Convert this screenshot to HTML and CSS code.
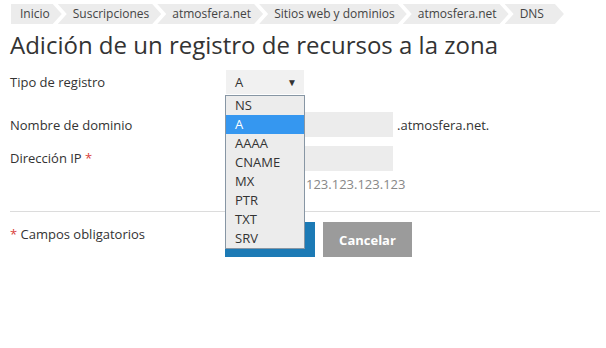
FILE: index.html
```html
<!DOCTYPE html>
<html lang="es">
<head>
    <meta charset="UTF-8">
    <title>Adición de un registro de recursos a la zona</title>
    <link rel="stylesheet" href="styles.css">
</head>
<body>
    <ul class="breadcrumb">
        <li class="crumb first">Inicio</li>
        <li class="crumb">Suscripciones</li>
        <li class="crumb">atmosfera.net</li>
        <li class="crumb">Sitios web y dominios</li>
        <li class="crumb">atmosfera.net</li>
        <li class="crumb">DNS</li>
    </ul>
    <h1 class="title">Adición de un registro de recursos a la zona</h1>

    <form class="form">
        <div class="row">
            <label class="label">Tipo de registro</label>
            <div class="field">
                <div class="select">
                    <span>A</span>
                    <span class="arrow">&#9660;</span>
                    <ul class="options">
                        <li>NS</li>
                        <li class="selected">A</li>
                        <li>AAAA</li>
                        <li>CNAME</li>
                        <li>MX</li>
                        <li>PTR</li>
                        <li>TXT</li>
                        <li>SRV</li>
                    </ul>
                </div>
            </div>
        </div>
        <div class="row row-domain">
            <label class="label">Nombre de dominio</label>
            <div class="field inline">
                <input class="input" type="text">
                <span class="suffix">.atmosfera.net.</span>
            </div>
        </div>
        <div class="row row-ip">
            <label class="label">Dirección IP <span class="req">*</span></label>
            <div class="field">
                <input class="input" type="text">
                <div class="hint">123.123.123.123</div>
            </div>
        </div>
        <div class="footer">
            <div class="label"><span class="req">*</span> Campos obligatorios</div>
            <div class="buttons">
                <!-- label is hidden behind the open list -->
                <button type="button" class="btn btn-primary" aria-label="Aceptar"></button>
                <button type="button" class="btn btn-cancel">Cancelar</button>
            </div>
        </div>
    </form>
</body>
</html>
```

FILE: styles.css
```css
body {
    font-family: "Open Sans", "Noto Sans", sans-serif;
    font-size: 13px;
    color: #333;
    margin: 0;
    padding: 0;
    background-color: #fff;
}
.breadcrumb {
    display: flex;
    list-style: none;
    margin: 4px 0 0 11px;
    padding: 0;
    height: 20px;
}
.crumb {
    background-color: #ececec;
    color: #444;
    font-size: 12px;
    line-height: 20px;
    padding: 0 12px 0 15px;
    margin-right: -6px;
    clip-path: polygon(0 0, calc(100% - 9px) 0, 100% 50%, calc(100% - 9px) 100%, 0 100%, 9px 50%);
}
.crumb.first {
    padding-left: 9px;
    clip-path: polygon(0 0, calc(100% - 9px) 0, 100% 50%, calc(100% - 9px) 100%, 0 100%);
}
.crumb:last-child {
    padding-right: 20px;
}
.crumb + .crumb {
    margin-left: 2px;
}
.title {
    font-size: 24px;
    font-weight: normal;
    line-height: 30px;
    margin: 6px 0 0 10px;
    color: #333;
}
.form {
    margin: 10px 0 0 0;
    padding: 0 6px 0 10px;
}
.row {
    display: grid;
    grid-template-columns: 216px 1fr;
    align-items: center;
}
.label {
    font-size: 13px;
}
.req {
    color: #d9413a;
}
.row-domain {
    margin-top: 18px;
}
.row-ip {
    margin-top: 9px;
    align-items: start;
}
.row-ip .label {
    line-height: 25px;
}
.select {
    position: relative;
    width: 78px;
    height: 24px;
    background-color: #f1f1f1;
    display: flex;
    justify-content: space-between;
    align-items: center;
    padding: 0 7px 0 9px;
    box-sizing: border-box;
}
.arrow {
    font-size: 10px;
}
.options {
    position: absolute;
    top: 25px;
    left: -1px;
    width: 78px;
    list-style: none;
    margin: 0;
    padding: 0;
    border: 1px solid #8796a4;
    background-color: #ececec;
    z-index: 2;
}
.options li {
    height: 19px;
    line-height: 19px;
    padding-left: 9px;
}
.options li.selected {
    background-color: #3597f0;
    color: #fff;
}
.inline {
    display: flex;
    align-items: center;
}
.input {
    width: 167px;
    height: 25px;
    box-sizing: border-box;
    border: none;
    background-color: #ececec;
    margin: 0;
}
.suffix {
    margin-left: 4px;
}
.hint {
    color: #888;
    font-size: 13px;
    margin-top: 4px;
    padding-left: 80px;
    line-height: 18px;
}
.footer {
    display: grid;
    grid-template-columns: 215px 1fr;
    align-items: start;
    border-top: 1px solid #dcdcdc;
    margin-top: 18px;
    padding-top: 10px;
}
.footer .label {
    line-height: 24px;
}
.buttons {
    display: flex;
    gap: 8px;
}
.btn {
    width: 90px;
    height: 35px;
    border: none;
    color: #fff;
    font-family: "Open Sans", "Noto Sans", sans-serif;
    font-size: 13px;
    font-weight: bold;
}
.btn-primary {
    background-color: #1c7ab5;
}
.btn-cancel {
    width: 89px;
    background-color: #9b9b9b;
}
```
